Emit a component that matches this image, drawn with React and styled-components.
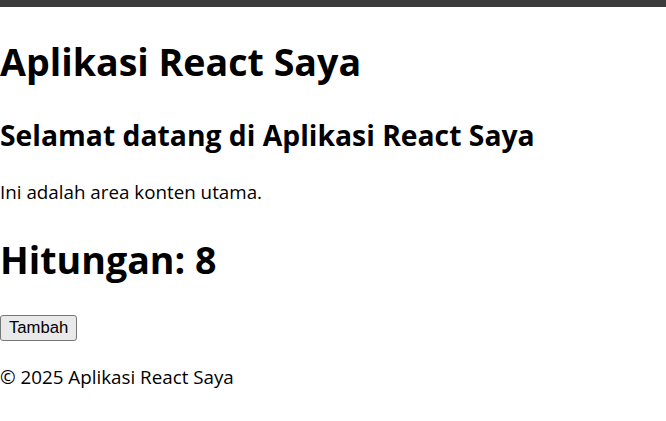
import React, { useState } from "react";
import styled, { createGlobalStyle } from "styled-components";

const GlobalStyle = createGlobalStyle`
  body {
    margin: 0;
    background: #fff;
    color: #000;
    font-family: "Open Sans", "Noto Sans", sans-serif;
    font-size: 18.8px;
    line-height: 26.6px;
  }
`;

const TopBar = styled.div`
  height: 7px;
  background: #3b3b3b;
`;

const Title = styled.h1`
  font-size: 37.6px;
  line-height: 53.2px;
  font-weight: 700;
  margin: 27.5px 0 26.8px;
`;

const SubTitle = styled.h2`
  font-size: 28.3px;
  line-height: 40px;
  font-weight: 700;
  margin: 24.9px 0;
`;

const Text = styled.p`
  margin: 20px 0;
`;

const Footer = styled.footer`
  padding-top: 3px;
`;

const Button = styled.button`
  font-family: "Liberation Sans", Arial, sans-serif;
  font-size: 16.67px;
  line-height: normal;
  padding: 2px 8px;
  border: 1px solid #767676;
  border-radius: 3px;
  background: #e9e9e9;
  color: #000;
`;

export default function App() {
  const [count, setCount] = useState(8);
  return (
    <>
      <GlobalStyle />
      <TopBar />
      <Title>Aplikasi React Saya</Title>
      <main>
        <SubTitle>Selamat datang di Aplikasi React Saya</SubTitle>
        <Text>Ini adalah area konten utama.</Text>
        <Title>Hitungan: {count}</Title>
        <Button onClick={() => setCount(count + 1)}>Tambah</Button>
      </main>
      <Footer>
        <Text>© 2025 Aplikasi React Saya</Text>
      </Footer>
    </>
  );
}
